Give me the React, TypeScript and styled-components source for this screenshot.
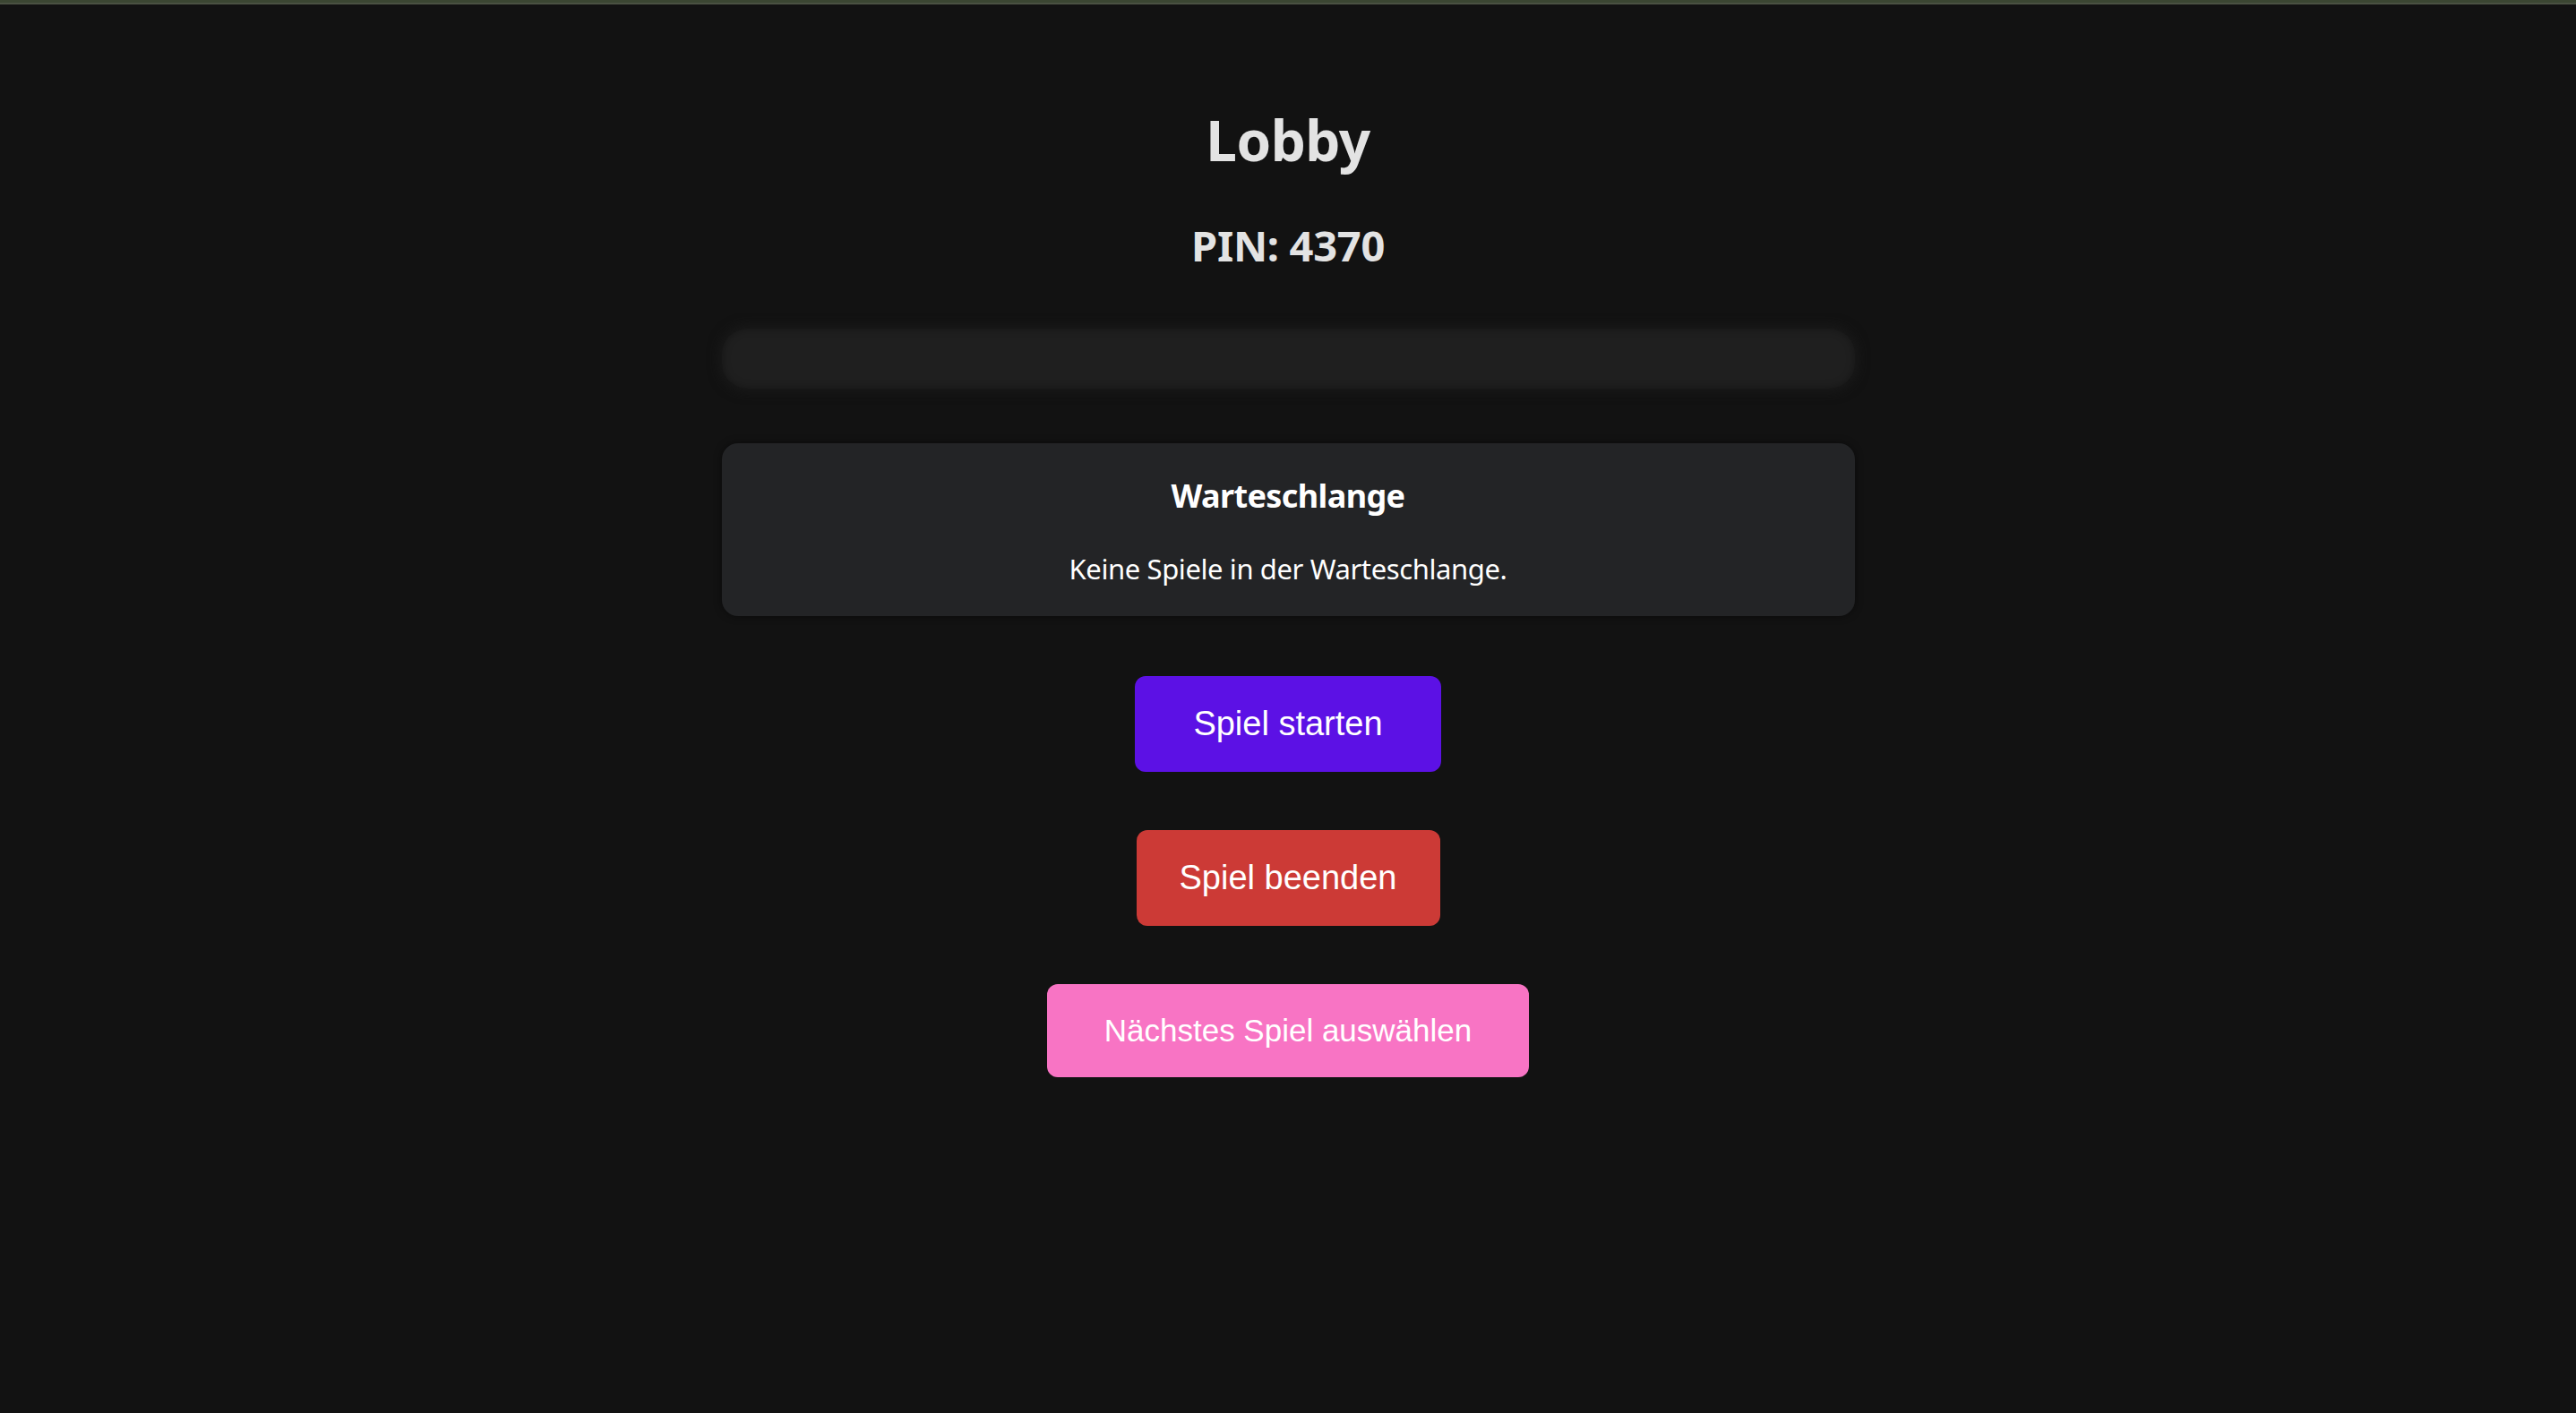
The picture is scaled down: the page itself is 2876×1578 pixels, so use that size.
import React from "react";
import styled, { createGlobalStyle } from "styled-components";

const Global = createGlobalStyle`
  html, body {
    margin: 0;
    padding: 0;
    background: #121212;
  }
  body {
    font-family: "Noto Sans", "Open Sans", sans-serif;
    color: #e4e4e4;
  }
`;

const Page = styled.div`
  min-height: 1578px;
  background: #121212;
  border-top: 3px solid #3b4632;
  box-sizing: border-box;
  &::before {
    content: "";
    display: block;
    height: 2px;
    background: #4a5142;
  }
`;

const Column = styled.main`
  width: 1265px;
  margin: 0 auto;
  display: flex;
  flex-direction: column;
  align-items: center;
  text-align: center;
  padding-top: 114px;
`;

const Title = styled.h1`
  margin: 0;
  font-size: 62px;
  line-height: 1.2;
  font-weight: 700;
  color: #e3e3e3;
  letter-spacing: -0.5px;
`;

const Pin = styled.h2`
  margin: 53px 0 0;
  font-size: 47px;
  line-height: 1.2;
  font-weight: 700;
  color: #e3e3e3;
  letter-spacing: -0.3px;
`;

const EmptyPanel = styled.div`
  align-self: stretch;
  height: 67px;
  margin-top: 64px;
  border-radius: 28px;
  background: #1f1f1f;
  box-shadow: inset 0 0 10px rgba(0, 0, 0, 0.35), 0 0 14px 2px rgba(28, 28, 28, 0.9);
`;

const QueueCard = styled.section`
  align-self: stretch;
  box-sizing: border-box;
  height: 193px;
  margin-top: 61px;
  padding-top: 37px;
  border-radius: 18px;
  background: #232426;
  box-shadow: 0 0 10px rgba(0, 0, 0, 0.45);
  display: flex;
  flex-direction: column;
  align-items: center;
`;

const QueueTitle = styled.h3`
  margin: 0;
  font-size: 36px;
  line-height: 1.2;
  font-weight: 700;
  color: #ffffff;
  letter-spacing: -0.6px;
`;

const QueueText = styled.p`
  margin: 42px 0 0;
  font-size: 31px;
  line-height: 1.2;
  font-weight: 400;
  color: #ffffff;
  letter-spacing: -0.4px;
`;

const Button = styled.button<{ $bg: string; $padX: number; $size: number; $h: number; $mt: number }>`
  margin-top: ${(p) => p.$mt}px;
  height: ${(p) => p.$h}px;
  padding: 0 ${(p) => p.$padX}px;
  border: none;
  border-radius: 12px;
  background: ${(p) => p.$bg};
  color: #ffffff;
  font-family: "Liberation Sans", Arial, sans-serif;
  font-size: ${(p) => p.$size}px;
  cursor: pointer;
  display: flex;
  align-items: center;
  justify-content: center;
`;

export default function App() {
  return (
    <>
      <Global />
      <Page>
        <Column>
          <Title>Lobby</Title>
          <Pin>PIN: 4370</Pin>
          <EmptyPanel />
          <QueueCard>
            <QueueTitle>Warteschlange</QueueTitle>
            <QueueText>Keine Spiele in der Warteschlange.</QueueText>
          </QueueCard>
          <Button $bg="#5c11e5" $padX={65} $size={38} $h={107} $mt={67}>
            Spiel starten
          </Button>
          <Button $bg="#cc3a36" $padX={48} $size={38} $h={107} $mt={65}>
            Spiel beenden
          </Button>
          <Button $bg="#f874c4" $padX={64} $size={35} $h={104} $mt={65}>
            Nächstes Spiel auswählen
          </Button>
        </Column>
      </Page>
    </>
  );
}
